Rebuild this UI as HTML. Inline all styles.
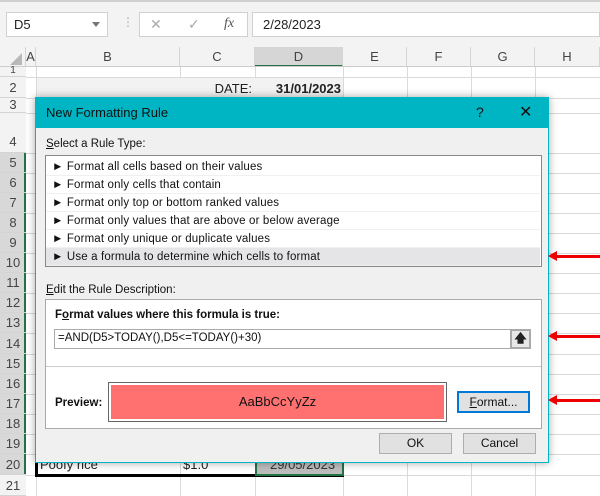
<!DOCTYPE html>
<html><head><style>
*{box-sizing:border-box;margin:0;padding:0}
body{width:600px;height:496px;overflow:hidden;background:#fff;font-family:"Liberation Sans",sans-serif;font-size:13px;position:relative;color:#222}
.a{position:absolute}
.rh{position:absolute;left:0;width:26px;text-align:center;font-size:13px;color:#444;border-bottom:1px solid #d4d4d4;background:#f3f3f3;z-index:3}
.ch{position:absolute;top:47px;height:20px;text-align:center;line-height:20px;font-size:13px;color:#444;border-right:1px solid #d4d4d4;background:#f3f3f3}
.vl{position:absolute;top:67px;width:1px;height:429px;background:#dadada}
.hl{position:absolute;left:26px;right:0;height:1px;background:#dadada}
.item{position:absolute;left:46px;height:18px;line-height:18px;font-size:11.5px;padding-left:6px;width:494px;color:#111;border-bottom:1px solid #f0f0f0;letter-spacing:0.15px}
.btn{position:absolute;background:#e1e1e1;border:1px solid #adadad;text-align:center;font-size:12px;color:#111}
.arr{position:absolute;height:3px;background:#e00}
.arr:before{content:"";position:absolute;left:-8px;top:-4px;border-right:9px solid #e00;border-top:5.5px solid transparent;border-bottom:5.5px solid transparent}
</style></head><body>
<div class="a" style="left:0;top:0;width:600px;height:47px;background:#f3f3f3;border-top:2px solid #d0d0d0"></div>
<div class="a" style="left:6px;top:12px;width:102px;height:25px;background:#fff;border:1px solid #d0d0d0;padding:4px 7px;font-size:13px">D5<span style="position:absolute;right:7px;top:9px;border-top:5px solid #777;border-left:4px solid transparent;border-right:4px solid transparent"></span></div>
<div class="a" style="left:122px;top:15px;color:#aaa;font-size:12px">⋮</div>
<div class="a" style="left:139px;top:12px;width:109px;height:25px;background:#fff;border:1px solid #d0d0d0;color:#aaa;font-size:14px">
<span class="a" style="left:10px;top:3px">✕</span><span class="a" style="left:48px;top:3px">✓</span><span class="a" style="left:84px;top:3px;color:#555;font-family:'Liberation Serif';font-style:italic">fx</span></div>
<div class="a" style="left:252px;top:12px;width:348px;height:25px;background:#fff;border:1px solid #d0d0d0;padding:4px 10px;font-size:13px">2/28/2023</div>
<div class="ch" style="left:0;width:26px"></div>
<div class="a" style="left:10px;top:53px;border-bottom:12px solid #b8b8b8;border-left:12px solid transparent"></div>
<div class="ch" style="left:26px;width:10px">A</div>
<div class="ch" style="left:36px;width:144px">B</div>
<div class="ch" style="left:180px;width:75px">C</div>
<div class="ch" style="left:255px;width:88px;background:#d6d6d6;border-bottom:2px solid #217346">D</div>
<div class="ch" style="left:343px;width:64px">E</div>
<div class="ch" style="left:407px;width:64px">F</div>
<div class="ch" style="left:471px;width:64px">G</div>
<div class="ch" style="left:535px;width:65px">H</div>
<div class="a" style="left:0;top:66px;width:600px;height:1px;background:#ccc"></div>
<div class="vl" style="left:36px"></div><div class="vl" style="left:180px"></div><div class="vl" style="left:255px"></div><div class="vl" style="left:343px"></div><div class="vl" style="left:407px"></div><div class="vl" style="left:471px"></div><div class="vl" style="left:535px"></div>
<div class="hl" style="top:77px"></div><div class="hl" style="top:98px"></div><div class="hl" style="top:113px"></div><div class="hl" style="top:153px"></div>
<div class="hl" style="top:173px"></div><div class="hl" style="top:193px"></div><div class="hl" style="top:213px"></div><div class="hl" style="top:233px"></div><div class="hl" style="top:253px"></div><div class="hl" style="top:273px"></div><div class="hl" style="top:293px"></div><div class="hl" style="top:313px"></div><div class="hl" style="top:333px"></div><div class="hl" style="top:354px"></div><div class="hl" style="top:374px"></div><div class="hl" style="top:394px"></div><div class="hl" style="top:414px"></div><div class="hl" style="top:434px"></div><div class="hl" style="top:454px"></div><div class="hl" style="top:475px"></div>
<div class="rh" style="top:67px;height:10px;line-height:8px;font-size:10px">1</div>
<div class="rh" style="top:77px;height:21px;line-height:21px">2</div>
<div class="rh" style="top:98px;height:15px;line-height:14px;font-size:13px">3</div>
<div class="rh" style="top:113px;height:40px;line-height:58px">4</div>
<div style="position:absolute;left:0;top:153px;width:26px;height:322px;background:#d8d8d8;border-right:2px solid #217346"></div>
<div class="rh" style="top:153px;height:20px;line-height:20px;background:none">5</div>
<div class="rh" style="top:173px;height:20px;line-height:20px;background:none">6</div>
<div class="rh" style="top:193px;height:20px;line-height:20px;background:none">7</div>
<div class="rh" style="top:213px;height:20px;line-height:20px;background:none">8</div>
<div class="rh" style="top:233px;height:20px;line-height:20px;background:none">9</div>
<div class="rh" style="top:253px;height:20px;line-height:20px;background:none">10</div>
<div class="rh" style="top:273px;height:20px;line-height:20px;background:none">11</div>
<div class="rh" style="top:293px;height:20px;line-height:20px;background:none">12</div>
<div class="rh" style="top:313px;height:20px;line-height:20px;background:none">13</div>
<div class="rh" style="top:333px;height:21px;line-height:21px;background:none">14</div>
<div class="rh" style="top:354px;height:20px;line-height:20px;background:none">15</div>
<div class="rh" style="top:374px;height:20px;line-height:20px;background:none">16</div>
<div class="rh" style="top:394px;height:20px;line-height:20px;background:none">17</div>
<div class="rh" style="top:414px;height:20px;line-height:20px;background:none">18</div>
<div class="rh" style="top:434px;height:20px;line-height:20px;background:none">19</div>
<div class="rh" style="top:454px;height:21px;line-height:21px;background:none">20</div>
<div class="rh" style="top:475px;height:21px;line-height:21px">21</div>
<div class="a" style="left:37px;top:78px;width:306px;height:20px;background:#f2f2f2"></div>
<div class="a" style="left:180px;top:81px;width:72px;text-align:right;font-size:13px">DATE:</div>
<div class="a" style="left:255px;top:81px;width:86px;text-align:right;font-size:13px;font-weight:bold">31/01/2023</div>
<div class="a" style="left:35px;top:113px;width:3px;height:363px;background:#000"></div>
<div class="a" style="left:35px;top:474px;width:309px;height:3px;background:#000"></div>
<div class="a" style="left:255px;top:454px;width:89px;height:22px;background:#bdbdbd;border:2px solid #217346"></div>
<div class="a" style="left:40px;top:457px;font-size:13px">Poofy rice</div>
<div class="a" style="left:183px;top:457px;font-size:13px">$1.0</div>
<div class="a" style="left:270px;top:457px;font-size:13px;color:#333">29/05/2023</div>
<div class="a" style="left:35px;top:97px;width:514px;height:366px;background:#f0f0f0;border:1px solid #00b4c4;box-shadow:0 0 8px rgba(0,0,0,.35)"></div>
<div class="a" style="left:35px;top:97px;width:514px;height:31px;background:#00b5c3"></div>
<div class="a" style="left:46px;top:105px;font-size:13px;color:#111">New Formatting Rule</div>
<div class="a" style="left:476px;top:104px;font-size:14px;color:#111">?</div>
<div class="a" style="left:519px;top:102px;font-size:16px;color:#111">✕</div>
<div class="a" style="left:46px;top:138px;font-size:11.5px;color:#111"><u>S</u>elect a Rule Type:</div>
<div class="a" style="left:45px;top:155px;width:497px;height:112px;background:#fff;border:1px solid #888"></div>
<div class="item" style="top:158px">► Format all cells based on their values</div>
<div class="item" style="top:176px">► Format only cells that contain</div>
<div class="item" style="top:194px">► Format only top or bottom ranked values</div>
<div class="item" style="top:212px">► Format only values that are above or below average</div>
<div class="item" style="top:230px">► Format only unique or duplicate values</div>
<div class="item" style="top:248px;background:#e5e5e8">► Use a formula to determine which cells to format</div>
<div class="a" style="left:46px;top:284px;font-size:11.5px;color:#111"><u>E</u>dit the Rule Description:</div>
<div class="a" style="left:45px;top:299px;width:497px;height:130px;background:#fff;border:1px solid #aaa"></div>
<div class="a" style="left:55px;top:309px;font-size:11.5px;font-weight:bold;color:#111">F<u>o</u>rmat values where this formula is true:</div>
<div class="a" style="left:54px;top:329px;width:477px;height:20px;border:1px solid #aaa;background:#fff;font-size:11.5px;padding:2px 3px;color:#111">=AND(D5&gt;TODAY(),D5&lt;=TODAY()+30)</div>
<div class="a" style="left:510px;top:329px;width:21px;height:20px;background:#e8e8e8;border:2px solid #aaa;text-align:center;font-size:12px;font-weight:bold;line-height:15px">🡅</div>
<div class="a" style="left:46px;top:366px;width:495px;height:1px;background:#ccc"></div>
<div class="a" style="left:55px;top:397px;font-size:11.5px;font-weight:bold;color:#111">Preview:</div>
<div class="a" style="left:108px;top:382px;width:339px;height:40px;border:1px solid #666;padding:2px;background:#fff"><div style="width:100%;height:100%;background:#ff7070;text-align:center;line-height:33px;font-size:13px;color:#111">AaBbCcYyZz</div></div>
<div class="btn" style="left:457px;top:391px;width:73px;height:22px;border:2px solid #0078d7;line-height:18px"><u>F</u>ormat...</div>
<div class="btn" style="left:379px;top:433px;width:73px;height:21px;line-height:19px">OK</div>
<div class="btn" style="left:463px;top:433px;width:73px;height:21px;line-height:19px">Cancel</div>
<div class="arr" style="left:556px;top:255px;width:44px"></div>
<div class="arr" style="left:556px;top:335px;width:44px"></div>
<div class="arr" style="left:556px;top:399px;width:44px"></div>
</body></html>
